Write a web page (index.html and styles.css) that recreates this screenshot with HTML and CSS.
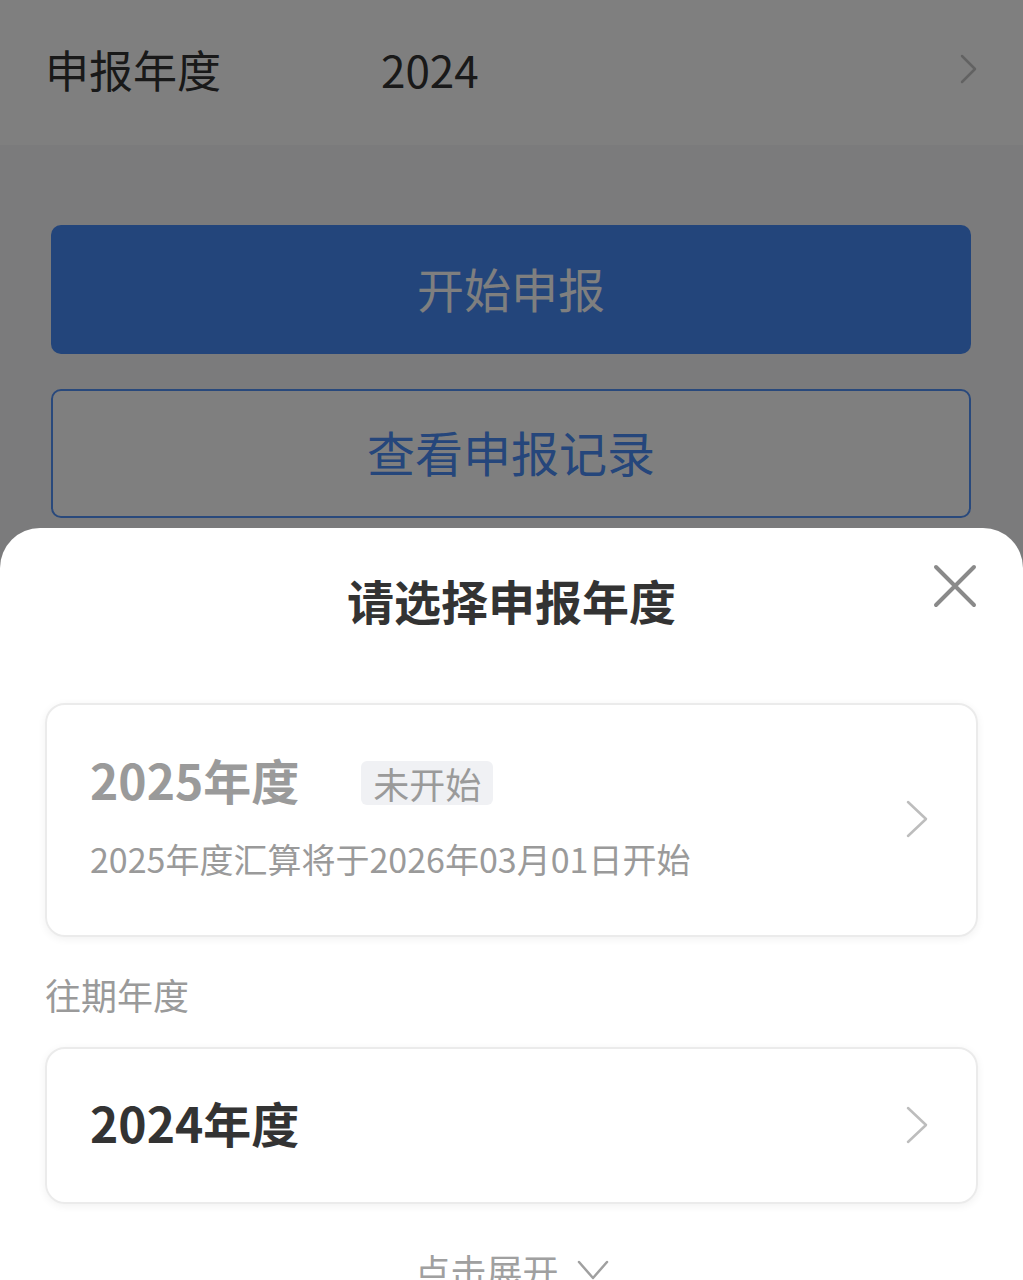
FILE: index.html
```html
<!DOCTYPE html>
<html lang="zh-CN">
<head>
    <meta charset="UTF-8">
    <meta name="viewport" content="width=device-width, initial-scale=1.0">
    <title>申报年度</title>
    <link rel="stylesheet" href="styles.css">
</head>
<body>
    <div class="page">
        <div class="year-row">
            <span class="year-label">申报年度</span>
            <span class="year-value">2024</span>
            <svg class="row-arrow" width="20" height="32" viewBox="0 0 20 32">
                <path d="M3 3 L16 16 L3 29" fill="none" stroke="#c4c4c4" stroke-width="2.5" stroke-linecap="round" stroke-linejoin="round"/>
            </svg>
        </div>

        <div class="actions">
            <button class="btn btn-primary">开始申报</button>
            <button class="btn btn-outline">查看申报记录</button>
        </div>
    </div>

    <div class="mask"></div>

    <div class="sheet">
        <h2 class="sheet-title">请选择申报年度</h2>
        <button class="sheet-close" aria-label="关闭">
            <svg width="44" height="44" viewBox="0 0 44 44">
                <path d="M3 3 L41 41 M41 3 L3 41" stroke="#8a8a8a" stroke-width="4" stroke-linecap="round"/>
            </svg>
        </button>

        <div class="card card-disabled">
            <div class="card-body">
                <div class="card-head">
                    <span class="card-year">2025年度</span>
                    <span class="tag">未开始</span>
                </div>
                <div class="card-desc">2025年度汇算将于2026年03月01日开始</div>
            </div>
            <svg class="card-arrow" width="22" height="38" viewBox="0 0 22 38">
                <path d="M2 2 L20 19 L2 36" fill="none" stroke="#bdbdbd" stroke-width="2.5" stroke-linecap="round" stroke-linejoin="round"/>
            </svg>
        </div>

        <div class="section-label">往期年度</div>

        <div class="card card-past">
            <div class="card-body">
                <span class="card-year">2024年度</span>
            </div>
            <svg class="card-arrow" width="22" height="38" viewBox="0 0 22 38">
                <path d="M2 2 L20 19 L2 36" fill="none" stroke="#bdbdbd" stroke-width="2.5" stroke-linecap="round" stroke-linejoin="round"/>
            </svg>
        </div>

        <div class="expand">
            点击展开
            <svg width="32" height="22" viewBox="0 0 32 22">
                <path d="M2 3 L16 19 L30 3" fill="none" stroke="#a0a0a0" stroke-width="2.5" stroke-linecap="round" stroke-linejoin="round"/>
            </svg>
        </div>
    </div>
</body>
</html>
```

FILE: styles.css
```css
* {
    box-sizing: border-box;
}
body {
    margin: 0;
    font-family: "Noto Sans CJK SC", "Noto Sans", sans-serif;
    background-color: #f6f6f8;
    color: #333;
    overflow: hidden;
}
.page {
    min-height: 1280px;
}
.year-row {
    display: flex;
    align-items: center;
    height: 145px;
    padding: 0 44px 8px 45px;
    background-color: #fff;
}
.year-label {
    width: 336px;
    font-size: 44px;
    color: #333;
}
.year-value {
    flex: 1;
    font-size: 44px;
    color: #333;
}
.row-arrow {
    display: block;
}
.actions {
    display: flex;
    flex-direction: column;
    gap: 35px;
    padding: 80px 52px 0 51px;
}
.btn {
    height: 129px;
    padding-bottom: 6px;
    border-radius: 10px;
    font-family: inherit;
    font-size: 47px;
    cursor: pointer;
}
.btn-primary {
    background-color: #468af6;
    border: none;
    color: #fff;
}
.btn-outline {
    background-color: #fff;
    border: 2px solid #5392f8;
    color: #4a8cf6;
    font-size: 48px;
}
.mask {
    position: fixed;
    inset: 0;
    background-color: rgba(0, 0, 0, 0.5);
}
.sheet {
    position: fixed;
    top: 528px;
    left: 0;
    right: 0;
    bottom: 0;
    padding: 36px 45px 0;
    background-color: #fff;
    border-radius: 40px 40px 0 0;
    overflow: hidden;
}
.sheet-title {
    margin: 0 0 67px;
    font-size: 47px;
    font-weight: 700;
    line-height: 72px;
    text-align: center;
    color: #333;
}
.sheet-close {
    position: absolute;
    top: 36px;
    right: 46px;
    padding: 0;
    border: none;
    background: none;
}
.sheet-close svg {
    display: block;
}
.card {
    display: flex;
    align-items: center;
    border: 2px solid #ebebeb;
    border-radius: 20px;
    box-shadow: 0 2px 8px rgba(0, 0, 0, 0.06);
    padding: 0 48px 8px 43px;
}
.card-body {
    flex: 1;
}
.card-arrow {
    display: block;
    margin-top: 6px;
}
.card-disabled {
    height: 234px;
}
.card-past {
    height: 157px;
}
.card-head {
    display: flex;
    align-items: center;
    gap: 62px;
}
.card-year {
    font-size: 48px;
    font-weight: 700;
    line-height: 60px;
    color: #333;
}
.card-disabled .card-year {
    color: #9a9a9a;
}
.tag {
    margin-top: 8px;
    padding: 0 12px;
    font-size: 36px;
    line-height: 44px;
    color: #9a9a9a;
    background-color: #f0f1f4;
    border-radius: 6px;
}
.card-desc {
    margin-top: 26px;
    font-size: 34px;
    line-height: 48px;
    color: #9a9a9a;
}
.section-label {
    margin: 32px 0 28px;
    font-size: 36px;
    line-height: 50px;
    color: #9a9a9a;
}
.expand {
    display: flex;
    justify-content: center;
    align-items: center;
    gap: 18px;
    margin-top: 41px;
    font-size: 36px;
    line-height: 50px;
    color: #a0a0a0;
}
```
